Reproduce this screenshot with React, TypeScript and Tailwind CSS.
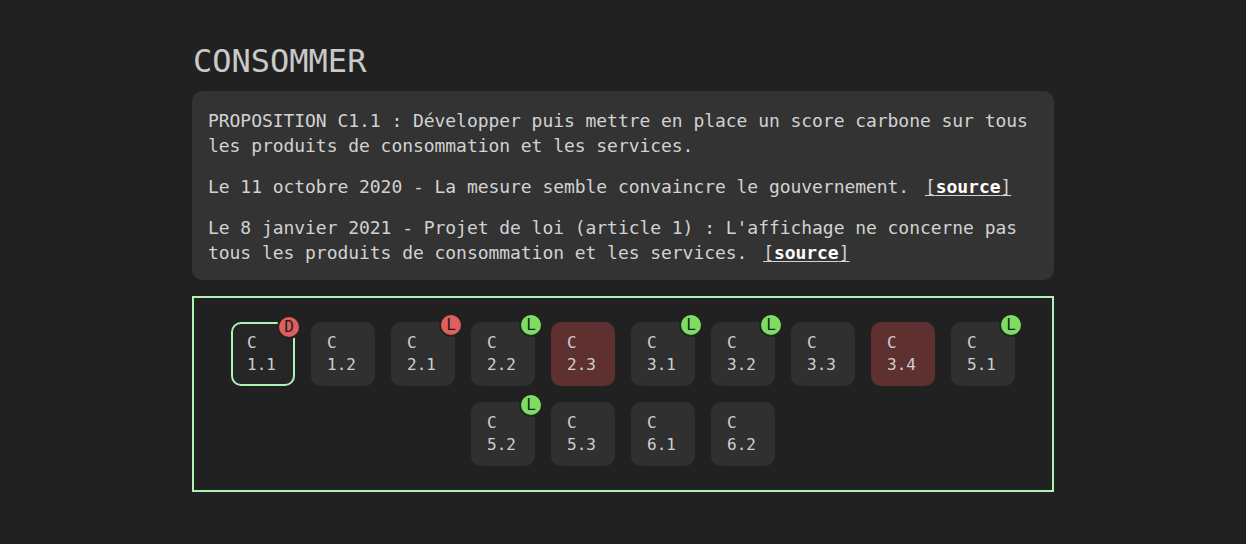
import React from 'react';

type Badge = 'D' | 'L' | null;

const tiles: { code: string; badge: Badge; tone: 'plain' | 'red' | 'selected' }[] = [
  { code: '1.1', badge: 'D', tone: 'selected' },
  { code: '1.2', badge: null, tone: 'plain' },
  { code: '2.1', badge: 'D', tone: 'plain' },
  { code: '2.2', badge: 'L', tone: 'plain' },
  { code: '2.3', badge: null, tone: 'red' },
  { code: '3.1', badge: 'L', tone: 'plain' },
  { code: '3.2', badge: 'L', tone: 'plain' },
  { code: '3.3', badge: null, tone: 'plain' },
  { code: '3.4', badge: null, tone: 'red' },
  { code: '5.1', badge: 'L', tone: 'plain' },
  { code: '5.2', badge: 'L', tone: 'plain' },
  { code: '5.3', badge: null, tone: 'plain' },
  { code: '6.1', badge: null, tone: 'plain' },
  { code: '6.2', badge: null, tone: 'plain' },
];

// 2.1 has a red "L" badge, 1.1 a red "D"
const badgeLetter: Record<string, string> = { '1.1': 'D', '2.1': 'L' };

export default function App() {
  return (
    <div
      className="min-h-screen bg-[#212121] text-[#d2d2d2] pt-[41px] pb-10"
      style={{ fontFamily: '"DejaVu Sans Mono", "Liberation Mono", monospace' }}
    >
      <div className="w-[862px] mx-auto">
        <h1 className="text-[32px] leading-[40px] text-[#c9c9c9] mb-[10px] pl-px">CONSOMMER</h1>

        <div className="bg-[#333333] rounded-[10px] px-4 pt-[17px] pb-[15px] text-[18px] leading-[25px] tracking-[-0.05px]">
          <p>
            PROPOSITION C1.1 : Développer puis mettre en place un score carbone sur tous les produits de
            consommation et les services.
          </p>
          <p className="mt-4">
            Le 11 octobre 2020 - La mesure semble convaincre le gouvernement. <Source />
          </p>
          <p className="mt-4">
            Le 8 janvier 2021 - Projet de loi (article 1) : L'affichage ne concerne pas tous les produits de
            consommation et les services. <Source />
          </p>
        </div>

        <div className="mt-4 border-2 border-[#aef2b6] py-4 flex flex-wrap justify-center">
          {tiles.map((t) => (
            <Tile key={t.code} code={t.code} badge={t.badge} tone={t.tone} />
          ))}
        </div>
      </div>
    </div>
  );
}

function Source() {
  return (
    <a href="#" className="ml-[5px] underline underline-offset-2 decoration-1">
      [<span className="text-white font-bold">source</span>]
    </a>
  );
}

function Tile({ code, badge, tone }: { code: string; badge: Badge; tone: 'plain' | 'red' | 'selected' }) {
  const bg =
    tone === 'red'
      ? 'bg-[#5f3030]'
      : tone === 'selected'
      ? 'bg-[#262626] border-2 border-[#aef2b6]'
      : 'bg-[#303030]';
  const red = badgeLetter[code] !== undefined;
  return (
    <div className={`relative m-2 w-16 h-16 rounded-[10px] flex flex-col justify-center px-4 text-[16px] leading-[22px] text-[#cfcfcf] ${bg}`}>
      <span className={tone === 'selected' ? '-ml-[2px]' : ''}>C</span>
      <span className={tone === 'selected' ? '-ml-[2px]' : ''}>{code}</span>
      {badge && (
        <span
          className={`absolute -top-[9px] -right-2 w-6 h-6 rounded-full border-2 border-[#222222] flex items-center justify-center text-[16px] leading-none text-[#1e1e1e] ${
            red ? 'bg-[#e05e5e]' : 'bg-[#7ddd62]'
          }`}
        >
          {red ? badgeLetter[code] : 'L'}
        </span>
      )}
    </div>
  );
}
